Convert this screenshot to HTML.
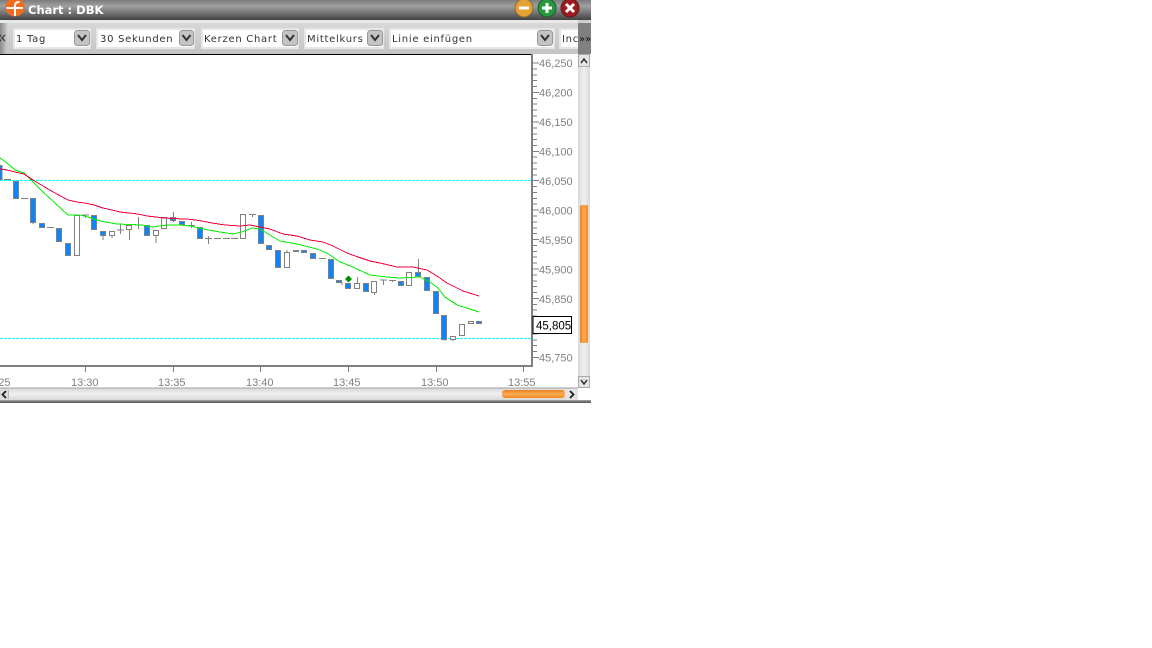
<!DOCTYPE html>
<html><head><meta charset="utf-8"><style>
html,body{margin:0;padding:0;background:#fff;width:1152px;height:648px;overflow:hidden}
svg{display:block}
.b{fill:#0a84ff;stroke:#808080;stroke-width:1;shape-rendering:crispEdges}
.w{fill:#fff;stroke:#808080;stroke-width:1;shape-rendering:crispEdges}
.l{stroke:#808080;stroke-width:1;fill:none;shape-rendering:crispEdges}
.t{font:11px "Liberation Sans",sans-serif;fill:#808080}
.s{font:10px "DejaVu Sans",sans-serif;fill:#333;letter-spacing:.72px}
.sel{fill:#fff;stroke:#e6e6e6;stroke-width:2}
.btn{fill:#c4c4c4;stroke:#999;stroke-width:1}
.chev{fill:none;stroke:#333;stroke-width:2}
</style></head><body>
<svg width="1152" height="648" viewBox="0 0 1152 648" xmlns="http://www.w3.org/2000/svg">
<defs>
<linearGradient id="tb" x1="0" y1="0" x2="0" y2="1"><stop offset="0" stop-color="#7c7c7c"/><stop offset=".3" stop-color="#a0a0a0"/><stop offset=".55" stop-color="#808080"/><stop offset="1" stop-color="#414141"/></linearGradient>
<linearGradient id="bar" x1="0" y1="0" x2="0" y2="1"><stop offset="0" stop-color="#d8d8d8"/><stop offset="1" stop-color="#c4c4c4"/></linearGradient>
<linearGradient id="ls" x1="0" y1="0" x2="1" y2="0"><stop offset="0" stop-color="#8a8a8a"/><stop offset="1" stop-color="#c9c9c9"/></linearGradient>
<linearGradient id="vt" x1="0" y1="0" x2="1" y2="0"><stop offset="0" stop-color="#d8d8d8"/><stop offset=".5" stop-color="#f0f0f0"/><stop offset="1" stop-color="#d8d8d8"/></linearGradient>
<linearGradient id="ht" x1="0" y1="0" x2="0" y2="1"><stop offset="0" stop-color="#d8d8d8"/><stop offset=".5" stop-color="#f0f0f0"/><stop offset="1" stop-color="#d8d8d8"/></linearGradient>
<linearGradient id="ov" x1="0" y1="0" x2="1" y2="0"><stop offset="0" stop-color="#e8801c"/><stop offset=".5" stop-color="#ffab55"/><stop offset="1" stop-color="#f08a24"/></linearGradient>
<linearGradient id="oh" x1="0" y1="0" x2="0" y2="1"><stop offset="0" stop-color="#e8801c"/><stop offset=".5" stop-color="#ffab55"/><stop offset="1" stop-color="#f08a24"/></linearGradient>
<linearGradient id="bt" x1="0" y1="0" x2="0" y2="1"><stop offset="0" stop-color="#a8a8a8"/><stop offset="1" stop-color="#4d4d4d"/></linearGradient>
</defs>

<!-- window -->
<rect x="0" y="0" width="591" height="403" fill="#fff"/>
<rect x="0" y="0" width="591" height="20" fill="url(#tb)"/>
<rect x="0" y="20" width="591" height="3" fill="#e8e8e8"/>
<rect x="0" y="23" width="591" height="31" fill="url(#bar)"/>
<rect x="0" y="23" width="7" height="31" fill="url(#ls)"/>
<rect x="578" y="20" width="13" height="34" fill="#808080"/>
<rect x="578" y="20" width="13" height="3" fill="#cfcfcf"/>

<!-- logo -->
<circle cx="15" cy="7" r="9.5" fill="#f26c1e"/>
<path d="M6.5 8H23M15 16V5.500Q15 2 19.500 2" fill="none" stroke="#fff" stroke-width="2"/>
<text x="28" y="14" font-family="DejaVu Sans,sans-serif" font-size="11.500" font-weight="bold" fill="#fff">Chart : DBK</text>

<!-- window buttons -->
<circle cx="524" cy="8" r="9" fill="#e3a233" stroke="#8a6a30"/>
<rect x="519" y="6.500" width="10" height="3" fill="#fff"/>
<circle cx="547" cy="8" r="9" fill="#249a3c" stroke="#1d5a2c"/>
<path d="M547 3V13M542 8H552" stroke="#fff" stroke-width="3"/>
<circle cx="570" cy="8" r="9" fill="#a01a22" stroke="#5a1a1a"/>
<path d="M566 4L574 12M574 4L566 12" stroke="#fff" stroke-width="3"/>

<!-- toolbar -->
<path d="M1 35L-2 38L1 41M5 35L2 38L5 41" fill="none" stroke="#333" stroke-width="1.200"/>
<rect class="sel" x="14" y="29" width="76" height="19"/><text class="s" x="16" y="42">1 Tag</text>
<rect class="btn" x="74.500" y="30.500" width="15" height="15" rx="3"/><path class="chev" d="M78 35L82 40L86 35"/>
<rect class="sel" x="97" y="29" width="97" height="19"/><text class="s" x="100" y="42">30 Sekunden</text>
<rect class="btn" x="179.500" y="30.500" width="14" height="15" rx="3"/><path class="chev" d="M182.500 35L186.500 40L190.500 35"/>
<rect class="sel" x="202" y="29" width="96" height="19"/><text class="s" x="204" y="42">Kerzen Chart</text>
<rect class="btn" x="282.500" y="30.500" width="15" height="15" rx="3"/><path class="chev" d="M286 35L290 40L294 35"/>
<rect class="sel" x="305" y="29" width="78" height="19"/><text class="s" x="307" y="42">Mittelkurs</text>
<rect class="btn" x="367.500" y="30.500" width="15" height="15" rx="3"/><path class="chev" d="M371 35L375 40L379 35"/>
<rect class="sel" x="390" y="29" width="164" height="19"/><text class="s" x="392" y="42">Linie einfügen</text>
<rect class="btn" x="537.500" y="30.500" width="15" height="15" rx="3"/><path class="chev" d="M541 35L545 40L549 35"/>
<rect class="sel" x="560" y="29" width="24" height="19"/><text class="s" x="562" y="42">Inc</text>
<rect x="578" y="23" width="13" height="31" fill="#808080"/>
<text x="579" y="42" font-family="DejaVu Sans,sans-serif" font-size="10" fill="#111">&#187;&#187;</text>

<!-- plot frame -->
<rect x="0" y="54" width="532" height="1" fill="#000"/>
<rect x="532" y="54" width="1" height="313" fill="#808080"/>
<rect x="531" y="54" width="1" height="313" fill="#808080"/>
<rect x="0" y="365" width="533" height="2" fill="#808080"/>
<path d="M0 180.500H531M0 338.500H531" stroke="#00ffff" stroke-width="1" stroke-dasharray="3 1"/>

<!-- price ticks -->
<path class="l" d="M533 63H539M533 69H537M533 75H537M533 80.500H537M533 86.500H537M533 92.500H539M533 98.500H537M533 104H537M533 110H537M533 116H537M533 122H539M533 128H537M533 134H537M533 139.500H537M533 145.500H537M533 151.500H539M533 157H537M533 163H537M533 169H537M533 175H537M533 180.500H539M533 186.500H537M533 192.500H537M533 198.500H537M533 204H537M533 210H539M533 216H537M533 222H537M533 228H537M533 233.500H537M533 239.500H539M533 245.500H537M533 251.500H537M533 257H537M533 263H537M533 269H539M533 275H537M533 281H537M533 286.500H537M533 292.500H537M533 298.500H539M533 304.500H537M533 310H537M533 316H537M533 322H537M533 334H537M533 340H537M533 345.500H537M533 351.500H537M533 357.500H539"/>
<g class="t">
<text x="539" y="67">46,250</text><text x="539" y="96.500">46,200</text><text x="539" y="126">46,150</text><text x="539" y="155.500">46,100</text><text x="539" y="185">46,050</text><text x="539" y="214.500">46,000</text><text x="539" y="244">45,950</text><text x="539" y="273.500">45,900</text><text x="539" y="303">45,850</text><text x="539" y="361.500">45,750</text>
</g>
<!-- time ticks -->
<path class="l" d="M85.500 367V372M173.500 367V372M260.500 367V372M348.500 367V372M436.500 367V372M523.500 367V372"/>
<g class="t">
<text x="-17" y="386">13:25</text><text x="71" y="386">13:30</text><text x="158" y="386">13:35</text><text x="246" y="386">13:40</text><text x="333" y="386">13:45</text><text x="421" y="386">13:50</text><text x="508" y="386">13:55</text>
</g>

<!-- wicks & dojis -->
<path class="l" d="M4 179.500H11M21 198.700H28M47 227.300H54M82 215H89M85.500 215V218M117 230H124M120.500 224V234M129.500 229V240M135 225H142M138.500 217V229M103 236V240M112 236V238M156 236V243M173.500 212V222M188 225.700H195M191.500 222V228M205 238.300H212M208.500 236V244M214 238.300H221M223 238.300H230M231 238.300H238M249 214.300H256M252.500 214V217M287 250V252M319 258.300H326M342 282V285M357.500 277V283M374.500 292V295M380 280H387M383.500 280V285M389 280.500H396M392.500 280V282M418.500 259V272M33 223V224M15 198V199M445 339V341M453 339V341"/>

<!-- candles -->
<g>
<rect class="b" x="-3" y="165.500" width="5" height="14"/>
<rect class="b" x="13.500" y="181.500" width="5" height="17"/>
<rect class="b" x="30.500" y="198.500" width="5" height="24"/>
<rect class="b" x="39.500" y="223.500" width="5" height="4"/>
<rect class="b" x="56.500" y="228.500" width="5" height="13"/>
<rect class="b" x="65.500" y="243.500" width="5" height="12"/>
<rect class="w" x="74.500" y="215.500" width="5" height="40"/>
<rect class="b" x="91.500" y="215.500" width="5" height="14"/>
<rect class="b" x="100.500" y="231.500" width="5" height="4"/>
<rect class="w" x="109.500" y="231.500" width="5" height="4"/>
<rect class="w" x="126.500" y="225.500" width="5" height="4"/>
<rect class="b" x="144.500" y="225.500" width="5" height="10"/>
<rect class="w" x="153.500" y="230.500" width="5" height="5"/>
<rect class="w" x="161.500" y="217.500" width="5" height="11"/>
<rect class="b" x="170.500" y="217.500" width="5" height="3"/>
<rect class="b" x="179.500" y="221.500" width="5" height="3"/>
<rect class="b" x="197.500" y="227.500" width="5" height="11"/>
<rect class="w" x="240.500" y="214.500" width="5" height="24"/>
<rect class="b" x="258.500" y="215.500" width="5" height="28"/>
<rect class="b" x="266.500" y="245.500" width="5" height="4"/>
<rect class="b" x="275.500" y="250.500" width="5" height="17"/>
<rect class="w" x="284.500" y="252.500" width="5" height="15"/>
<rect class="b" x="293.500" y="250.500" width="5" height="1"/>
<rect class="b" x="301.500" y="250.500" width="5" height="2"/>
<rect class="b" x="310.500" y="253.500" width="5" height="5"/>
<rect class="b" x="328.500" y="259.500" width="5" height="19"/>
<rect class="b" x="336.500" y="280.500" width="5" height="2"/>
<rect class="b" x="345.500" y="283.500" width="5" height="5"/>
<rect class="w" x="354.500" y="283.500" width="5" height="5"/>
<rect class="b" x="363.500" y="283.500" width="5" height="8"/>
<rect class="w" x="371.500" y="281.500" width="5" height="11"/>
<rect class="b" x="398.500" y="281.500" width="5" height="4"/>
<rect class="w" x="406.500" y="272.500" width="5" height="13"/>
<rect class="b" x="415.500" y="272.500" width="5" height="4"/>
<rect class="b" x="424.500" y="277.500" width="5" height="13"/>
<rect class="b" x="433.500" y="291.500" width="5" height="22"/>
<rect class="b" x="441.500" y="315.500" width="5" height="24"/>
<rect class="w" x="450.500" y="336.500" width="5" height="3"/>
<rect class="w" x="459.500" y="324.500" width="5" height="11"/>
<rect class="w" x="468.500" y="321.500" width="5" height="2"/>
<rect class="b" x="476.500" y="321.500" width="5" height="2"/>
</g>

<!-- green line -->
<polyline fill="none" stroke="#00f000" stroke-width="1" shape-rendering="crispEdges" points="0,158 7,163 15,170 24,173 33,182 43,192 55,203 68,215 80,215 88,217 100,221 117,224 142,225 153,227 167,225 180,225 190,226 203,229 220,232 233,234 242,232 252,228 260,229 270,235 280,241 297,244 317,249 327,253 340,262 343,263 355,268 370,275 387,277 400,278 420,277 430,282 438,288 445,297 457,305 467,308 479,312"/>
<!-- red line -->
<polyline fill="none" stroke="#f0003c" stroke-width="1" shape-rendering="crispEdges" points="0,169 7,170 15,172 24,174 33,180 43,186 55,193 68,200 77,202 85,203 94,205 103,208 112,210 120,212 129,213 138,214 147,216 156,217 164,218 173,218.500 190,219.300 200,220.700 212,223 225,225 240,226 250,225 260,227 270,229 283,234 297,236 310,240 323,242 333,246 347,253 358,257 370,261 380,263 397,267 413,267 427,270 437,276 447,283 463,291 479,296"/>
<!-- diamond -->
<path d="M348.500 275.500L352 279L348.500 282.500L345 279Z" fill="#008a00"/>

<!-- price box -->
<rect x="533" y="316.500" width="38.500" height="17" fill="#fff" stroke="#000"/>
<text x="536" y="329.500" font-family="Liberation Sans,sans-serif" font-size="11.500" fill="#000">45,805</text>

<!-- vertical scrollbar -->
<rect x="578" y="54" width="12" height="334" fill="url(#vt)"/>
<rect x="590" y="54" width="1" height="334" fill="#fff"/>
<rect x="578.500" y="54.500" width="11" height="12" fill="#e4e4e4" stroke="#aaa"/>
<path d="M581 63L584 59L587 63" fill="none" stroke="#333" stroke-width="1.500"/>
<rect x="580" y="205" width="8" height="138" rx="2" fill="url(#ov)"/>
<rect x="578.500" y="376.500" width="11" height="11" fill="#e4e4e4" stroke="#aaa"/>
<path d="M581 380L584 384L587 380" fill="none" stroke="#333" stroke-width="1.500"/>

<!-- horizontal scrollbar -->
<rect x="0" y="388" width="578" height="12" fill="url(#ht)"/>
<rect x="0" y="387.500" width="578" height="1" fill="#a0a0a0"/>
<rect x="0" y="389" width="8" height="11" fill="#dcdcdc"/>
<path d="M6 391L2.500 394.500L6 398" fill="none" stroke="#222" stroke-width="1.800"/>
<rect x="8" y="390" width="1" height="9" fill="#b8b8b8"/>
<rect x="502" y="390" width="63" height="8" rx="3" fill="url(#oh)"/>
<rect x="566" y="389" width="12" height="11" fill="#e4e4e4"/>
<path d="M570 391L573.500 394.500L570 398" fill="none" stroke="#222" stroke-width="1.800"/>
<rect x="578" y="388" width="13" height="12" fill="#fff"/>

<rect x="0" y="400" width="591" height="3" fill="url(#bt)"/>
</svg>
</body></html>
